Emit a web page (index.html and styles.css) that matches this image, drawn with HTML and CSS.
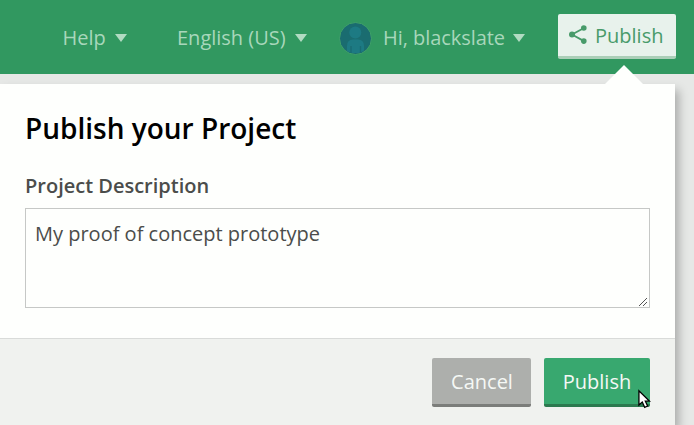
FILE: index.html
```html
<!DOCTYPE html>
<html lang="en">
<head>
<meta charset="utf-8">
<title>Publish your Project</title>
<link rel="stylesheet" href="styles.css">
</head>
<body>
<header class="topbar">
  <nav class="menu">
    <a class="menu-item help">Help <i class="caret"></i></a>
    <a class="menu-item language">English (US) <i class="caret"></i></a>
    <a class="menu-item user">
      <svg class="avatar" viewBox="0 0 33 33"><circle cx="16.5" cy="16.5" r="16" fill="#1a6c70" stroke="#40a168"/><circle cx="16.3" cy="10.5" r="6" fill="#1d7a83"/><path d="M8 29v-5q0-6.500 6-6.500h5q6 0 6 6.500v4.500q-3 2-5 2.500h-7q-3-.5-5-2z" fill="#1d7a83"/><path d="M12 24v7M21.500 24v7" stroke="#196b72" stroke-width="1.300"/></svg>
      <span class="greeting">Hi, blackslate</span> <i class="caret"></i>
    </a>
  </nav>
  <button class="share">
    <svg class="share-icon" viewBox="0 0 18 19"><path d="M15 3L3 9.500l12 6.600" fill="none" stroke="#489b6a" stroke-width="1.800"/><g fill="#489b6a"><circle cx="14.800" cy="3" r="2.800"/><circle cx="3" cy="9.500" r="3"/><circle cx="14.800" cy="16.100" r="2.800"/></g></svg>
    <span class="share-label">Publish</span>
  </button>
</header>
<main class="dialog">
  <section class="content">
    <h1>Publish your Project</h1>
    <label for="description">Project Description</label>
    <div class="field">
      <textarea id="description" spellcheck="false">My proof of concept prototype</textarea>
      <svg class="grip" viewBox="0 0 8 8" shape-rendering="crispEdges"><path d="M0 7h1v-1h1v-1h1v-1h1v-1h1v-1h1v-1h1v-1h1v1h-1v1h-1v1h-1v1h-1v1h-1v1h-1v1h-1v1h-1zM4 7h1v-1h1v-1h1v-1h1v1h-1v1h-1v1h-1v1h-1z" fill="#555"/></svg>
    </div>
  </section>
  <footer class="actions">
    <button class="button cancel">Cancel</button>
    <button class="button confirm">Publish</button>
  </footer>
</main>
<svg class="cursor" viewBox="0 0 14 21"><path d="M1 1v15.500l3.600-3.200 2.600 5.700 3.200-1.500-2.500-5.200h4.600z" fill="#fff" stroke="#000" stroke-width="1.400"/></svg>
</body>
</html>
```
FILE: styles.css
```css
* { box-sizing: border-box; }
body {
  margin: 0;
  height: 425px;
  overflow: hidden;
  background: #e6e8e6;
  font: 20px/28px "Open Sans", sans-serif;
  color: #4b4d4b;
}
button { font: inherit; border: 0; }
.topbar {
  position: relative;
  display: flex;
  align-items: flex-start;
  height: 74px;
  padding-left: 62.5px;
  background: #319860;
}
.menu { display: flex; width: 495.5px; padding-top: 20px; }
.menu-item {
  display: flex;
  align-items: center;
  height: 36px;
  color: #a8d7bb;
  white-space: nowrap;
}
.help { width: 114.5px; }
.language { width: 162px; }
.greeting { letter-spacing: -.05px; }
.caret {
  margin-left: 9px;
  border: 6px solid transparent;
  border-top: 8px solid #b1dbc2;
  border-bottom: 0;
}
.user .caret { margin-left: 8px; }
.avatar { width: 33px; height: 33px; margin-right: 11px; }
.share {
  display: flex;
  align-items: center;
  width: 118px;
  height: 45px;
  margin-top: 14px;
  padding: 0 0 0 11px;
  gap: 8px;
  color: #489b6a;
  background: #e8f2ec;
  border-bottom: 3px solid #abcfb8;
  border-radius: 2px;
}
.share-icon { width: 18px; height: 19px; margin-bottom: 2px; }
.share-label { padding-top: 2px; }
.dialog {
  position: relative;
  width: 675px;
  height: 341px;
  margin-top: 10px;
  background: #fefffd;
  box-shadow: 4px 6px 9px rgba(0, 0, 0, .26);
}
.dialog::before {
  content: "";
  position: absolute;
  top: -19px;
  left: 605px;
  border: 19px solid transparent;
  border-top: 0;
  border-bottom-color: #fefffd;
}
.content { height: 254px; padding: 24px 25px 0; }
h1 {
  margin: 0 0 24px;
  color: #000;
  font-size: 28px;
  font-weight: 600;
  line-height: 40px;
}
label { display: block; margin-bottom: 8px; font-weight: 600; }
.field { position: relative; height: 100px; }
textarea {
  display: block;
  width: 625px;
  height: 100px;
  padding: 11px 9px;
  border: 1px solid #c6c8c6;
  background: #fefffd;
  color: #4b4d4b;
  font: inherit;
  resize: none;
  outline: 0;
}
.grip { position: absolute; right: 3px; bottom: 2px; width: 8px; height: 8px; }
.actions {
  display: flex;
  justify-content: flex-end;
  gap: 13px;
  height: 87px;
  padding: 19px 25px 0;
  border-top: 1px solid #d9dbd9;
  background: #f0f2ef;
}
.button {
  height: 49px;
  padding: 2px 0 0;
  color: #f5f8f5;
  border-bottom: 3px solid #7b7d7a;
  border-radius: 2px;
}
.cancel { width: 99px; padding-left: 1px; background: #adafac; }
.confirm { width: 106px; background: #38a86f; border-bottom-color: #2c794f; }
.cursor { position: absolute; top: 389px; left: 637.5px; width: 13px; height: 21px; }
```
